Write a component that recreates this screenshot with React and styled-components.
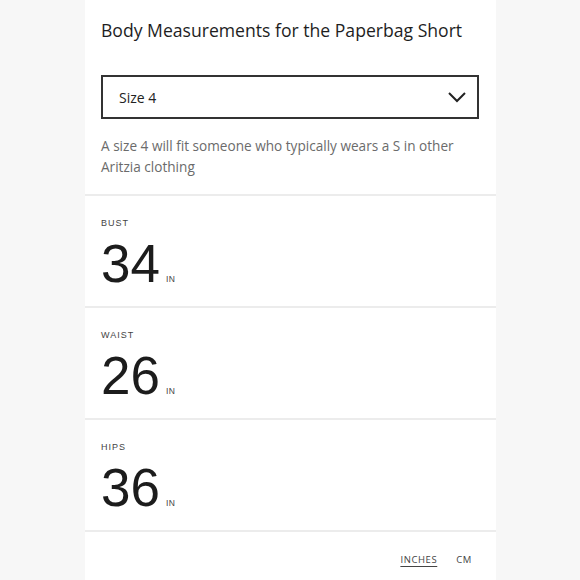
import React from "react";
import styled, { createGlobalStyle } from "styled-components";

const Global = createGlobalStyle`
  html, body { margin: 0; padding: 0; background: #f7f7f7; }
  body { font-family: "Open Sans", "Liberation Sans", sans-serif; }
`;

const Page = styled.div`
  width: 580px;
  height: 580px;
  display: flex;
  justify-content: center;
  background: #f7f7f7;
  overflow: hidden;
`;

const Panel = styled.div`
  width: 411px;
  margin-left: 1px;
  background: #fff;
  display: flex;
  flex-direction: column;
`;

const Header = styled.div`
  padding: 18px 17px 0 16px;
`;

const Title = styled.h1`
  margin: 0;
  font-size: 17.6px;
  font-weight: 400;
  color: #1e1e1e;
  line-height: 24px;
`;

const Select = styled.div`
  margin-top: 33px;
  height: 40px;
  border: 2px solid #333;
  display: flex;
  align-items: center;
  justify-content: space-between;
  padding: 0 10px 0 16px;
  font-size: 14px;
  color: #222;
`;

const Desc = styled.p`
  margin: 16px 0 0;
  font-size: 13.6px;
  line-height: 21px;
  color: #6b6b6b;
  padding-bottom: 17px;
`;

const Divider = styled.div`
  height: 2px;
  background: #ececec;
`;

const Section = styled.div`
  height: 110px;
  padding: 22px 16px 0;
  box-sizing: border-box;
`;

const Label = styled.div`
  font-family: "Liberation Sans", Arial, sans-serif;
  font-size: 9px;
  letter-spacing: 1px;
  color: #444;
  line-height: 10px;
`;

const ValueRow = styled.div`
  display: flex;
  align-items: baseline;
  gap: 6px;
  margin-top: 5px;
`;

const Number = styled.span`
  font-family: "Liberation Sans", Arial, sans-serif;
  font-size: 53px;
  line-height: 62px;
  color: #1c1c1c;
`;

const Unit = styled.span`
  font-family: "Liberation Sans", Arial, sans-serif;
  font-size: 8.5px;
  letter-spacing: 0.5px;
  color: #444;
`;

const Footer = styled.div`
  display: flex;
  justify-content: flex-end;
  gap: 19px;
  padding: 21px 24px 0 0;
`;

const UnitLink = styled.span`
  font-size: 9.5px;
  letter-spacing: 0.6px;
  color: #444;
  text-decoration: ${(p) => (p.$active ? "underline" : "none")};
  text-underline-offset: 3px;
`;

const items = [
  ["BUST", "34"],
  ["WAIST", "26"],
  ["HIPS", "36"],
];

export default function App() {
  return (
    <Page>
      <Global />
      <Panel>
        <Header>
          <Title>Body Measurements for the Paperbag Short</Title>
          <Select>
            <span>Size 4</span>
            <svg width="20" height="12" viewBox="0 0 20 12" fill="none">
              <path d="M2 2l8 8 8-8" stroke="#222" strokeWidth="2" />
            </svg>
          </Select>
          <Desc>
            A size 4 will fit someone who typically wears a S in other Aritzia
            clothing
          </Desc>
        </Header>
        <Divider />
        {items.map(([l, v]) => (
          <React.Fragment key={l}>
            <Section>
              <Label>{l}</Label>
              <ValueRow>
                <Number>{v}</Number>
                <Unit>IN</Unit>
              </ValueRow>
            </Section>
            <Divider />
          </React.Fragment>
        ))}
        <Footer>
          <UnitLink $active>INCHES</UnitLink>
          <UnitLink>CM</UnitLink>
        </Footer>
      </Panel>
    </Page>
  );
}
